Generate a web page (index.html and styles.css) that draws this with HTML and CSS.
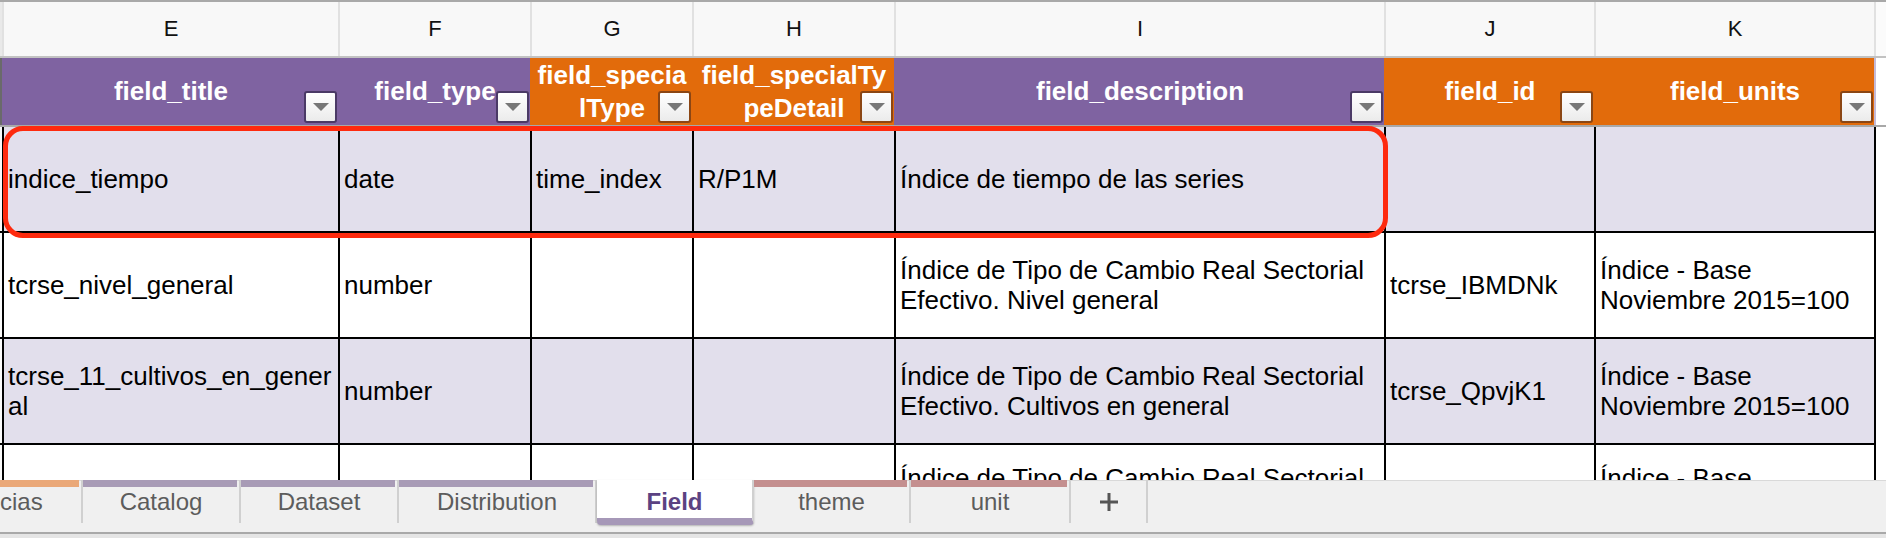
FILE: index.html
```html
<!DOCTYPE html>
<html lang="es">
<head>
<meta charset="utf-8">
<title>Field</title>
<link rel="stylesheet" href="styles.css">
</head>
<body>
<div class="app">
  <div class="sheet">
    <div class="grid colheads">
      <div class="stub"></div>
      <div class="c">E</div>
      <div class="c">F</div>
      <div class="c">G</div>
      <div class="c">H</div>
      <div class="c">I</div>
      <div class="c">J</div>
      <div class="c last">K</div>
      <div class="c fill"></div>
    </div>
    <div class="grid hdr">
      <div class="stub"></div>
      <div class="h p">field_title<span class="dd"></span></div>
      <div class="h p">field_type<span class="dd"></span></div>
      <div class="h o">field_specia<br>lType<span class="dd"></span></div>
      <div class="h o">field_specialTy<br>peDetail<span class="dd"></span></div>
      <div class="h p">field_description<span class="dd"></span></div>
      <div class="h o">field_id<span class="dd"></span></div>
      <div class="h o last">field_units<span class="dd"></span></div>
      <div class="fill"></div>
    </div>
    <div class="grid r alt">
      <div class="stub"></div>
      <div class="d">indice_tiempo</div>
      <div class="d">date</div>
      <div class="d">time_index</div>
      <div class="d">R/P1M</div>
      <div class="d">Índice de tiempo de las series</div>
      <div class="d"></div>
      <div class="d last"></div>
      <div class="fill"></div>
    </div>
    <div class="grid r">
      <div class="stub"></div>
      <div class="d">tcrse_nivel_general</div>
      <div class="d">number</div>
      <div class="d"></div>
      <div class="d"></div>
      <div class="d">Índice de Tipo de Cambio Real Sectorial Efectivo. Nivel general</div>
      <div class="d">tcrse_IBMDNk</div>
      <div class="d last">Índice - Base Noviembre 2015=100</div>
      <div class="fill"></div>
    </div>
    <div class="grid r alt">
      <div class="stub"></div>
      <div class="d">tcrse_11_cultivos_en_gener<br>al</div>
      <div class="d">number</div>
      <div class="d"></div>
      <div class="d"></div>
      <div class="d">Índice de Tipo de Cambio Real Sectorial Efectivo. Cultivos en general</div>
      <div class="d">tcrse_QpvjK1</div>
      <div class="d last">Índice - Base Noviembre 2015=100</div>
      <div class="fill"></div>
    </div>
    <div class="grid r r4">
      <div class="stub"></div>
      <div class="d"></div>
      <div class="d"></div>
      <div class="d"></div>
      <div class="d"></div>
      <div class="d">Índice de Tipo de Cambio Real Sectorial Efectivo. Frutas</div>
      <div class="d"></div>
      <div class="d last">Índice - Base Noviembre 2015=100</div>
      <div class="fill"></div>
    </div>
    <div class="highlight"></div>
  </div>
  <div class="tabbar">
    <div class="tab t-or w-cias">cias</div>
    <div class="tab t-pu w-cat">Catalog</div>
    <div class="tab t-pu w-cat">Dataset</div>
    <div class="tab t-pu w-dist">Distribution</div>
    <div class="tab active w-field">Field</div>
    <div class="tab t-rd w-field">theme</div>
    <div class="tab t-rd w-unit">unit</div>
    <div class="tab w-plus"><svg width="20" height="20" viewBox="0 0 20 20"><path d="M10 1v18M1 10h18" stroke="#555" stroke-width="3" fill="none"/></svg></div>
  </div>
  <div class="tabfoot"></div>
</div>
</body>
</html>
```

FILE: styles.css
```css
html, body {
  margin: 0;
  padding: 0;
  background: #fff;
}
body {
  width: 1886px;
  height: 538px;
  overflow: hidden;
  font-family: "Liberation Sans", Arial, Helvetica, sans-serif;
  color: #000;
}
.app {
  display: flex;
  flex-direction: column;
  height: 538px;
}
.sheet {
  position: relative;
  height: 480px;
  overflow: hidden;
  flex: none;
}
.grid {
  display: grid;
  grid-template-columns: 2px 336px 192px 162px 202px 490px 210px 282px 1fr;
}

/* column letters */
.colheads {
  height: 58px;
  box-sizing: border-box;
  border-top: 2px solid #a9a9a9;
  border-bottom: 2px solid #c2c2c2;
  background: #f8f8f8;
}
.colheads .stub { background: #e9e9e9; }
.colheads .c {
  border-left: 2px solid #e1e1e1;
  display: flex;
  align-items: center;
  justify-content: center;
  font-size: 22px;
  color: #111;
}
.colheads .c.last { border-right: 2px solid #e1e1e1; }
.colheads .c.fill { border-left: none; background: #fbfbfb; }

/* table header row */
.hdr {
  height: 69px;
  box-sizing: border-box;
  border-bottom: 2px solid #a8a8a8;
}
.hdr .stub { background: #6a6a6a; }
.h {
  position: relative;
  border-left: 2px solid transparent;
  display: flex;
  align-items: center;
  justify-content: center;
  text-align: center;
  color: #fff;
  font-weight: bold;
  font-size: 26px;
  line-height: 33px;
}
.h.p { background: #7f63a1; }
.h.o { background: #e26b0b; }
.h.last { border-right: 2px solid #c4b9d6; }
.dd {
  position: absolute;
  right: 1px;
  bottom: 2px;
  width: 33px;
  height: 32px;
  box-sizing: border-box;
  border: 2px solid #4b3a66;
  border-radius: 3px;
  background: linear-gradient(#ffffff, #ebebeb);
  display: flex;
  align-items: center;
  justify-content: center;
}
.h.o .dd { border-color: #8b4614; }
.dd::after {
  content: "";
  width: 0;
  height: 0;
  border-left: 8px solid transparent;
  border-right: 8px solid transparent;
  border-top: 8px solid #777;
}

/* body rows */
.r { height: 106px; }
.r4 { height: 98px; }
.r .stub {
  border-bottom: 2px solid #000;
  background: #fafafa;
}
.d {
  border-left: 2px solid #000;
  border-bottom: 2px solid #000;
  padding: 0 2px 0 4px;
  display: flex;
  align-items: center;
  font-size: 26px;
  line-height: 30px;
  overflow: hidden;
}
.d.last { border-right: 2px solid #000; }
.r.alt .d { background: #e2dfec; }

/* selection highlight overlay */
.highlight {
  position: absolute;
  left: 3px;
  top: 126px;
  width: 1385px;
  height: 112px;
  box-sizing: border-box;
  border: 5px solid #fe2a0e;
  border-radius: 20px;
  pointer-events: none;
}

/* sheet tabs */
.tabbar {
  height: 54px;
  box-sizing: border-box;
  border-bottom: 2px solid #a9a9a9;
  background: #f0f0f0;
  box-shadow: inset 0 1px 0 #d9d9d9;
  display: flex;
  align-items: flex-start;
  flex: none;
}
.tabfoot {
  height: 4px;
  background: #e5e5e5;
  flex: none;
}
.tab {
  height: 43px;
  box-sizing: border-box;
  border-right: 2px solid #d0d0d0;
  display: flex;
  align-items: center;
  justify-content: center;
  font-size: 24px;
  color: #5c5c5c;
  background-repeat: no-repeat;
  background-position: left top;
  background-size: calc(100% - 2px) 7px;
  flex: none;
}
.t-or { background-image: linear-gradient(#eaa878, #eaa878); }
.t-pu { background-image: linear-gradient(#a89bb6, #a89bb6); }
.t-rd { background-image: linear-gradient(#c48f8f, #c48f8f); }
.tab.active {
  height: 45px;
  padding-top: 5px;
  background: #fff;
  border-bottom: 7px solid #a698b8;
  border-radius: 0 0 4px 4px;
  box-shadow: 0 1px 2px rgba(0, 0, 0, 0.25);
  font-weight: bold;
  color: #5b4282;
}
.w-cias { width: 83px; justify-content: flex-start; }
.w-cat { width: 158px; }
.w-dist { width: 198px; }
.w-field { width: 157px; }
.w-unit { width: 160px; }
.w-plus { width: 77px; }
```
